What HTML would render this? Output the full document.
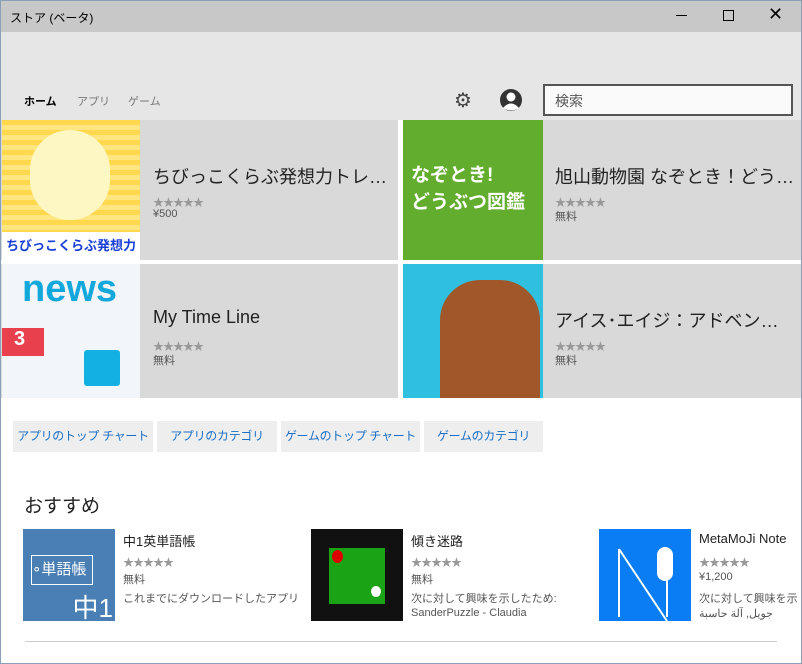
<!DOCTYPE html>
<html><head><meta charset="utf-8"><style>
*{margin:0;padding:0;box-sizing:border-box}
body{width:802px;height:664px;overflow:hidden;background:#fff;font-family:"Liberation Sans","Noto Sans CJK JP",sans-serif;position:relative;}
.a{position:absolute}
.tb{left:0;top:0;width:802px;height:32px;background:#c8c8c8;}
.hdr{left:0;top:32px;width:802px;height:88px;background:#e6e6e6}
.tile{background:#d9d9d9;overflow:hidden}
.t1{font-size:18px;color:#222;white-space:nowrap;overflow:hidden;text-overflow:ellipsis;width:240px}
.st{font-size:11px;color:#999;letter-spacing:-1px}
.sm{font-size:11px;color:#555}
.btn{top:421px;height:31px;background:#eee;color:#1a6fc4;font-size:12px;line-height:31px;text-align:center;white-space:nowrap;letter-spacing:-0.3px}
</style></head><body>
<div class="a tb"></div>
<div class="a" style="left:10px;top:9px;font-size:12px;color:#000">ストア (ベータ)</div>
<div class="a" style="left:676px;top:15px;width:11px;height:1px;background:#000"></div>
<div class="a" style="left:723px;top:10px;width:11px;height:11px;border:1px solid #000"></div>
<div class="a" style="left:768px;top:4px;font-size:18px;color:#000">✕</div>
<div class="a hdr"></div>
<div class="a" style="left:24px;top:93px;font-size:11px;font-weight:bold;color:#000">ホーム</div>
<div class="a" style="left:77px;top:93px;font-size:11px;color:#777">アプリ</div>
<div class="a" style="left:128px;top:93px;font-size:11px;color:#777">ゲーム</div>
<div class="a" style="left:454px;top:88px;font-size:20px;color:#444">⚙</div>
<svg class="a" style="left:499px;top:88px" width="24" height="24"><circle cx="12" cy="12" r="11" fill="#333"/><circle cx="12" cy="9" r="4.5" fill="#fff"/><path d="M4 20 Q12 11 20 20 Q12 25 4 20Z" fill="#fff"/></svg>
<div class="a" style="left:543px;top:84px;width:250px;height:32px;border:2px solid #555;background:#fafafa;font-size:14px;color:#555;padding:5px 10px">検索</div>

<div class="a tile" style="left:0;top:120px;width:398px;height:140px"></div>
<div class="a" style="left:2px;top:120px;width:138px;height:140px;background:repeating-linear-gradient(#ffd84d 0 5px,#ffe680 5px 10px)"></div>
<div class="a" style="left:30px;top:130px;width:80px;height:90px;background:#fdf7c3;border-radius:40px"></div>
<div class="a" style="left:2px;top:232px;width:138px;height:28px;background:#fff;color:#1a3fd6;font-size:13px;font-weight:bold;text-align:center;line-height:28px">ちびっこくらぶ発想力</div>
<div class="a t1" style="left:153px;top:163px">ちびっこくらぶ発想力トレーニン…</div>
<div class="a st" style="left:153px;top:194px">★★★★★</div>
<div class="a sm" style="left:153px;top:208px">¥500</div>

<div class="a tile" style="left:403px;top:120px;width:399px;height:140px"></div>
<div class="a" style="left:403px;top:120px;width:140px;height:140px;background:#62ac2e;color:#fff;font-weight:bold;font-size:19px;padding:40px 8px 0;white-space:nowrap;overflow:hidden">なぞとき!<br>どうぶつ図鑑</div>
<div class="a t1" style="left:555px;top:163px">旭山動物園 なぞとき！どう…</div>
<div class="a st" style="left:555px;top:194px">★★★★★</div>
<div class="a sm" style="left:555px;top:208px">無料</div>

<div class="a tile" style="left:0;top:264px;width:398px;height:134px"></div>
<div class="a" style="left:2px;top:264px;width:138px;height:134px;background:#f2f5f9"></div>
<div class="a" style="left:22px;top:268px;font-size:38px;font-weight:bold;color:#13a8dc">news</div>
<div class="a" style="left:2px;top:328px;width:42px;height:28px;background:#e8414d;color:#fff;font-size:20px;font-weight:bold;padding-left:12px">3</div>
<div class="a" style="left:84px;top:350px;width:36px;height:36px;background:#13b0e4;border-radius:3px"></div>
<div class="a t1" style="left:153px;top:307px">My Time Line</div>
<div class="a st" style="left:153px;top:338px">★★★★★</div>
<div class="a sm" style="left:153px;top:352px">無料</div>

<div class="a tile" style="left:403px;top:264px;width:399px;height:134px"></div>
<div class="a" style="left:403px;top:264px;width:140px;height:134px;background:#2fc0e0"></div>
<div class="a" style="left:440px;top:280px;width:100px;height:118px;background:#a0582a;border-radius:40px 40px 0 0"></div>
<div class="a t1" style="left:555px;top:307px">アイス･エイジ：アドベンチャー</div>
<div class="a st" style="left:555px;top:338px">★★★★★</div>
<div class="a sm" style="left:555px;top:352px">無料</div>

<div class="a btn" style="left:13px;width:140px">アプリのトップ チャート</div>
<div class="a btn" style="left:157px;width:120px">アプリのカテゴリ</div>
<div class="a btn" style="left:281px;width:139px">ゲームのトップ チャート</div>
<div class="a btn" style="left:424px;width:119px">ゲームのカテゴリ</div>

<div class="a" style="left:24px;top:491px;font-size:19px;color:#222">おすすめ</div>

<div class="a" style="left:23px;top:529px;width:92px;height:92px;background:#4a7fb5;color:#fff;overflow:hidden"><div style="position:absolute;left:8px;top:26px;width:62px;height:30px;border:1.5px solid #fff;font-size:15px;line-height:28px">∘単語帳</div><div style="position:absolute;right:2px;bottom:-4px;font-size:26px">中1</div></div>
<div class="a" style="left:123px;top:531px;font-size:13px;color:#222">中1英単語帳</div>
<div class="a st" style="left:123px;top:554px">★★★★★</div>
<div class="a sm" style="left:123px;top:571px">無料</div>
<div class="a sm" style="left:123px;top:590px;white-space:nowrap">これまでにダウンロードしたアプリ</div>

<div class="a" style="left:311px;top:529px;width:92px;height:92px;background:#111"></div>
<div class="a" style="left:329px;top:548px;width:56px;height:56px;background:#1aa315"></div>
<div class="a" style="left:332px;top:550px;width:11px;height:13px;background:#d00;border-radius:50%"></div>
<div class="a" style="left:371px;top:586px;width:10px;height:11px;background:#fff;border-radius:50%"></div>
<div class="a" style="left:411px;top:531px;font-size:13px;color:#222">傾き迷路</div>
<div class="a st" style="left:411px;top:554px">★★★★★</div>
<div class="a sm" style="left:411px;top:571px">無料</div>
<div class="a sm" style="left:411px;top:590px;white-space:nowrap">次に対して興味を示したため:</div>
<div class="a sm" style="left:411px;top:607px">SanderPuzzle - Claudia</div>

<div class="a" style="left:599px;top:529px;width:92px;height:92px;background:#0a7df5"></div>
<svg class="a" style="left:599px;top:529px" width="92" height="92"><path d="M20 20 L68 92 M20 20 V88 M68 20 V88" stroke="#fff" stroke-width="2" fill="none"/><rect x="58" y="18" width="16" height="34" rx="8" fill="#fff"/></svg>
<div class="a" style="left:699px;top:531px;font-size:13px;color:#222;white-space:nowrap;width:103px;overflow:hidden">MetaMoJi Note</div>
<div class="a st" style="left:699px;top:554px">★★★★★</div>
<div class="a sm" style="left:699px;top:571px">¥1,200</div>
<div class="a sm" style="left:699px;top:590px;white-space:nowrap;width:103px;overflow:hidden">次に対して興味を示</div>
<div class="a sm" style="left:699px;top:607px;white-space:nowrap;width:103px;overflow:hidden">جويل, آلة حاسبة</div>

<div class="a" style="left:25px;top:641px;width:752px;height:1px;background:#ccc"></div>
<div class="a" style="left:0;top:0;width:802px;height:664px;border:1px solid #8aa0b8;pointer-events:none"></div>
</body></html>
